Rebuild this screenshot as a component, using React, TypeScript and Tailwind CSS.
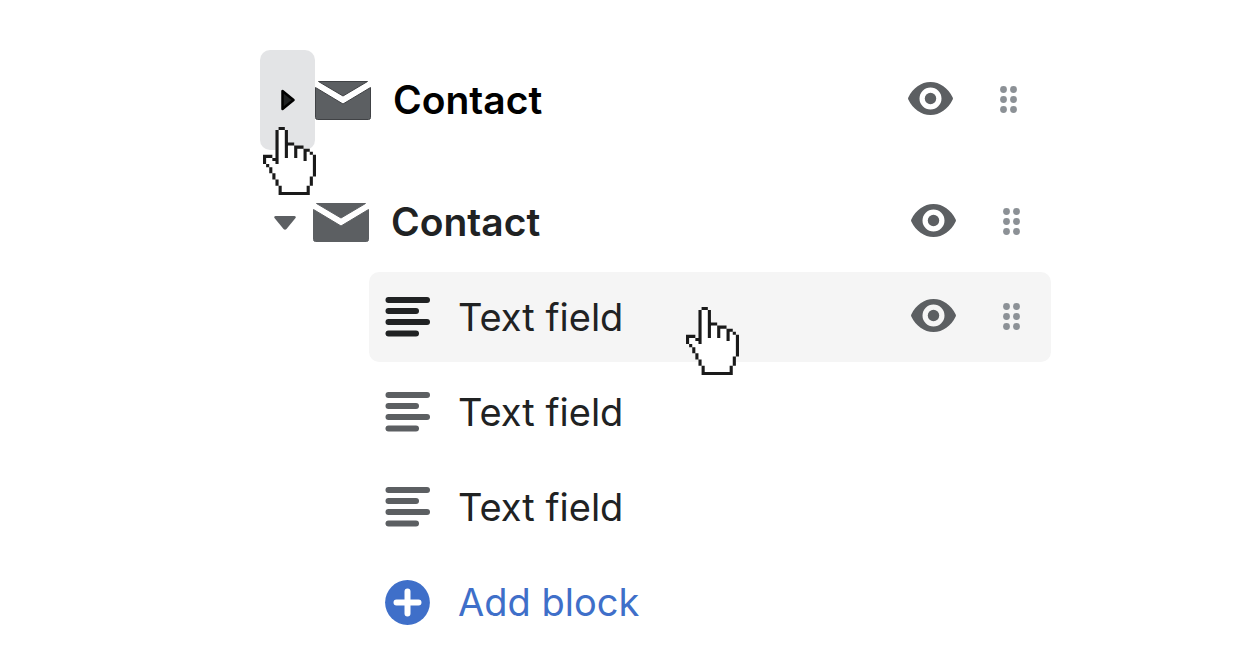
import { useState } from "react";

type Block = {
  id: number;
  name: string;
  active: boolean;
};

const blocks: Block[] = [
  { id: 1, name: "Text field", active: true },
  { id: 2, name: "Text field", active: false },
  { id: 3, name: "Text field", active: false },
];

// Icons
function MailIcon({ outlined = false }: { outlined?: boolean }) {
  return (
    <svg
      className={outlined ? "stroke-[#404245]" : "stroke-[#5c5f62]"}
      width="56"
      height="39"
      viewBox="0 0 56 39"
      fill="#5c5f62"
      strokeWidth="1"
      strokeLinejoin="round"
    >
      <path d="M3.500 0.500H52.500L28 15Z" />
      <path d="M0.500 6.500L28 23L55.500 6.500V36.500Q55.500 38.500 53.500 38.500H2.500Q0.500 38.500 0.500 36.500Z" />
    </svg>
  );
}

function EyeIcon() {
  return (
    <svg width="45" height="36" viewBox="0 0 45 36" fill="#5c5f62">
      <path
        fillRule="evenodd"
        d="M0.300 17.500Q-0.200 16.500 0.300 15.500C5 6 13 0 22.500 0S40 6 44.700 15.500Q45.200 16.500 44.700 17.500C40 27 32 33 22.500 33S5 27 0.300 17.500ZM22.500 5.500A11 11 0 1 0 22.500 27.500A11 11 0 1 0 22.500 5.500Z"
      />
      <circle cx="22.500" cy="16.500" r="5.700" />
    </svg>
  );
}

function DragIcon() {
  return (
    <svg width="17" height="28" viewBox="0 0 17 28" fill="#8c9196">
      {[3.5, 13.5, 23.5].map((y) => (
        <g key={y}>
          <circle cx="3.500" cy={y} r="3.400" />
          <circle cx="13.500" cy={y} r="3.400" />
        </g>
      ))}
    </svg>
  );
}

function TextIcon({ active }: { active: boolean }) {
  return (
    <svg width="45" height="40" viewBox="0 0 45 40" fill={active ? "#202223" : "#5c5f62"}>
      <rect x="0.500" y="0" width="44.500" height="6" rx="3" />
      <rect x="0.500" y="11" width="33.500" height="6" rx="3" />
      <rect x="0.500" y="22" width="44.500" height="6" rx="3" />
      <rect x="0.500" y="33.500" width="33.500" height="6" rx="3" />
    </svg>
  );
}

function PlusIcon() {
  return (
    <svg width="45" height="45" viewBox="0 0 45 45">
      <circle cx="22.500" cy="22.500" r="22.400" fill="#3f6fc9" />
      <path d="M22.500 11.500V33.500M11.500 22.500H33.500" stroke="white" strokeWidth="6" strokeLinecap="round" />
    </svg>
  );
}

// Pixel hand, one unit per pixel
function HandCursor() {
  return (
    <svg width="53" height="68" viewBox="0 0 17 22" preserveAspectRatio="none">
      <path
        fill="white"
        d="M5 1H7V6H10V7H13V8H15V9H16V16H15V19H14V21H5V19H4V17H3V15H2V13H1V10H3V11H5Z"
      />
      <path
        fill="#1a1a1a"
        d="M5 0h2v1h-2zM4 1h1v11h-1zM7 1h1v9h-1zM8 5h2v1h-2zM10 6h3v1h-3zM10 7h1v3h-1zM13 7h2v1h-2zM13 8h1v3h-1zM15 8h1v1h-1zM16 9h1v7h-1zM15 16h1v3h-1zM14 19h1v3h-1zM5 21h9v1h-9zM5 19h1v2h-1zM4 17h1v2h-1zM3 15h1v2h-1zM2 13h1v2h-1zM1 12h1v1h-1zM0 9h1v3h-1zM1 9h2v1h-2zM3 10h1v1h-1z"
      />
    </svg>
  );
}

function RowActions() {
  return (
    <div className="ml-auto flex items-center gap-[47px]">
      <button aria-label="Toggle visibility">
        <EyeIcon />
      </button>
      <button aria-label="Drag to reorder" className="cursor-grab">
        <DragIcon />
      </button>
    </div>
  );
}

function App() {
  const [open, setOpen] = useState(true);

  return (
    <main className="min-h-screen bg-white pt-[50px] pr-[195px] pl-[260px] font-[Inter,sans-serif] text-[38px] leading-[48px] text-[#202223]">
      {/* Collapsed section */}
      <section className="flex h-[100px] items-center pr-[34px]">
        <div className="relative">
          <button
            aria-label="Expand section"
            className="flex h-[100px] w-[55px] items-center justify-center rounded-[10px] bg-[#e3e4e6]"
          >
            <svg width="15" height="22" viewBox="0 0 15 22">
              <path
                d="M2.500 2V20L13.500 11Z"
                fill="#202223"
                stroke="black"
                strokeWidth="2.500"
                strokeLinejoin="round"
              />
            </svg>
          </button>
          <div className="pointer-events-none absolute top-[77px] left-[3px] z-10">
            <HandCursor />
          </div>
        </div>
        <MailIcon outlined />
        <h2 className="ml-[22px] text-[39px] font-semibold text-black">Contact</h2>
        <RowActions />
      </section>

      {/* Expanded section */}
      <section className="mt-[27px]">
        <div className="flex h-[90px] items-center pr-[31px]">
          <button
            aria-label="Collapse section"
            aria-expanded={open}
            onClick={() => setOpen(!open)}
            className="mr-[3px] flex h-full w-[50px] items-center justify-center"
          >
            <svg width="22" height="16" viewBox="0 0 22 16" fill="#5c5f62">
              <path d="M1.500 2H20.500Q22.500 2.500 21.500 4L12.500 15Q11 16.500 9.500 15L0.500 4Q-0.500 2.500 1.500 2Z" />
            </svg>
          </button>
          <MailIcon />
          <h2 className="ml-[22px] text-[39px] font-semibold">Contact</h2>
          <RowActions />
        </div>

        {open && (
          <ul className="mt-[5px] ml-[109px] flex flex-col gap-[5px]">
            {blocks.map((item) => (
              <li
                key={item.id}
                className={
                  item.active
                    ? "relative flex h-[90px] items-center rounded-[10px] bg-[#f5f5f5] pr-[31px] pl-4"
                    : "flex h-[90px] items-center pr-[31px] pl-4"
                }
              >
                <TextIcon active={item.active} />
                <span className="ml-7">{item.name}</span>
                {item.active && <RowActions />}
                {item.active && (
                  <div className="pointer-events-none absolute top-[35px] left-[317px]">
                    <HandCursor />
                  </div>
                )}
              </li>
            ))}
            <li>
              <button className="flex h-[90px] w-full items-center pl-4 text-[#3f6fc9]">
                <PlusIcon />
                <span className="ml-7">Add block</span>
              </button>
            </li>
          </ul>
        )}
      </section>
    </main>
  );
}

export default App;
